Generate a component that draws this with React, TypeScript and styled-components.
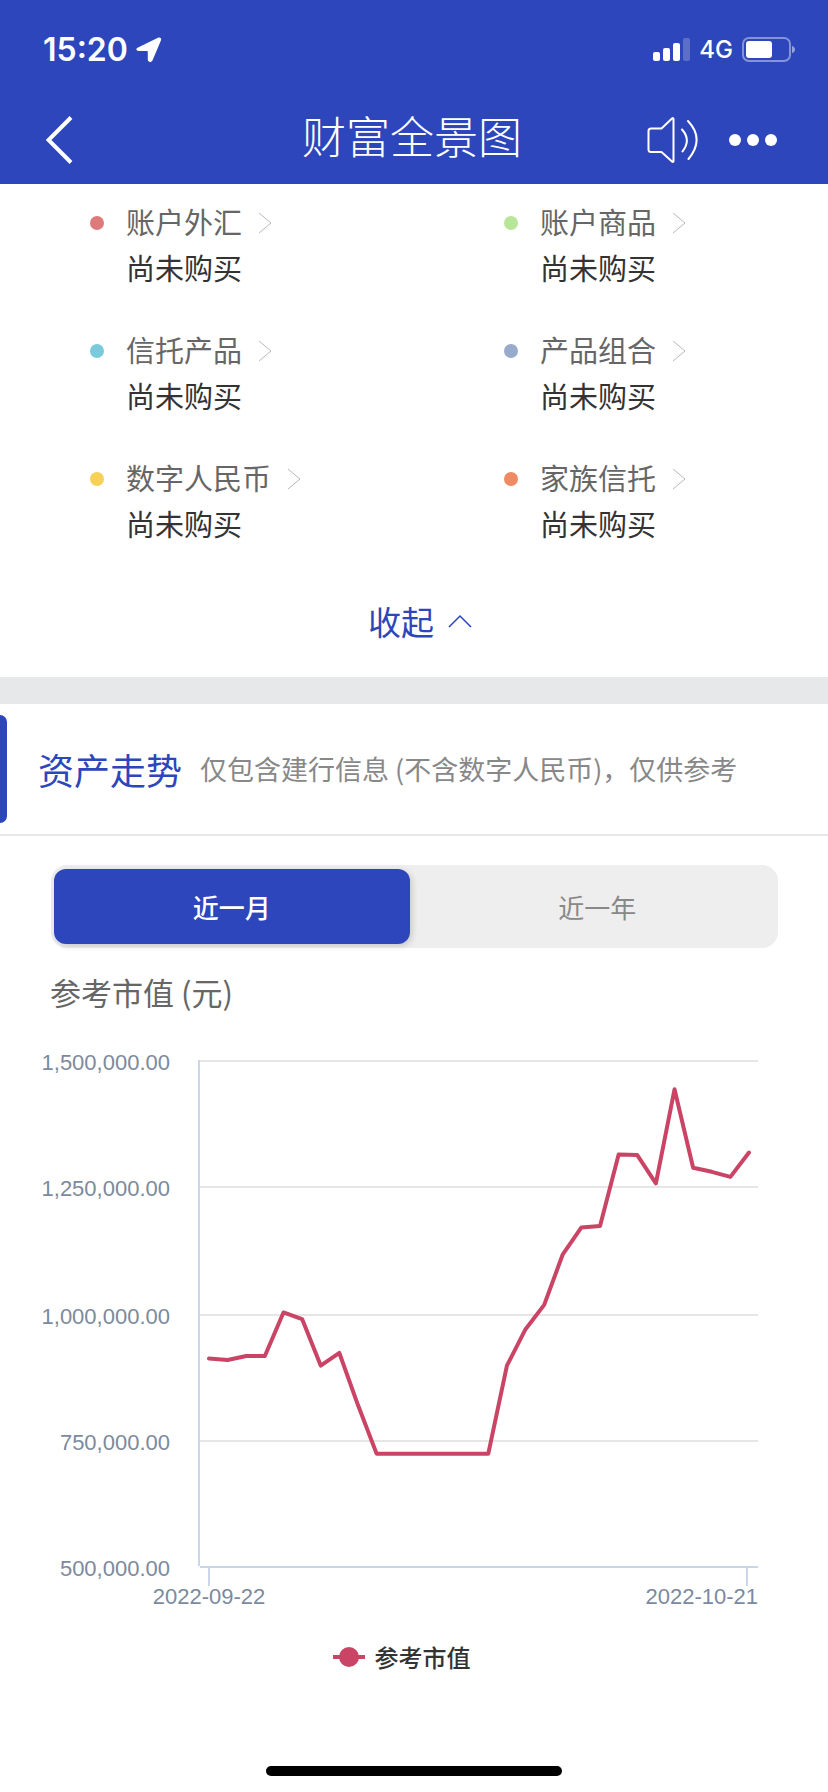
import React, { useState } from "react";
import styled, { createGlobalStyle } from "styled-components";

const BLUE = "#2d46bb";
const ROSE = "#c94465";

const GlobalStyle = createGlobalStyle`
  * { box-sizing: border-box; }
  body {
    margin: 0;
    background: #ffffff;
    font-family: "Noto Sans CJK SC", "Liberation Sans", sans-serif;
    color: #333333;
  }
  button {
    padding: 0;
    border: 0;
    background: none;
    font: inherit;
    color: inherit;
    cursor: pointer;
  }
  h1, h2, h3, p, ul { margin: 0; padding: 0; font-weight: 400; }
  a { color: inherit; text-decoration: none; }
  svg { display: block; flex: none; }
`;

const Page = styled.div`
  display: flex;
  flex-direction: column;
  min-height: 100vh;
`;

const Header = styled.header`
  background: ${BLUE};
  color: #ffffff;
`;

const StatusBar = styled.div`
  display: flex;
  align-items: center;
  justify-content: space-between;
  height: 100px;
  padding: 0 32px 0 43px;
  font-family: Inter, sans-serif;
`;

const StatusGroup = styled.div<{ $gap: number }>`
  display: flex;
  align-items: center;
  gap: ${(p) => p.$gap}px;
`;

const Time = styled.span`
  font-size: 32px;
  line-height: 40px;
  font-weight: 600;
`;

const Network = styled.span`
  font-size: 24px;
  line-height: 32px;
  font-weight: 500;
`;

const NavBar = styled.nav`
  display: grid;
  grid-template-columns: 1fr auto 1fr;
  align-items: center;
  height: 84px;
  padding: 0 50px 14px 46px;
`;

const NavTitle = styled.h1`
  font-size: 44px;
  line-height: 64px;
  font-weight: 300;
`;

const NavActions = styled.div`
  display: flex;
  align-items: center;
  justify-content: flex-end;
  gap: 28px;
  padding-top: 10px;
`;

const BackButton = styled.button`
  justify-self: start;
  padding-top: 10px;
`;

const Products = styled.ul`
  display: grid;
  grid-template-columns: 1fr 1fr;
  row-gap: 36px;
  padding-top: 14px;
  list-style: none;
`;

const Product = styled.li`
  display: grid;
  grid-template-columns: 14px 1fr;
  column-gap: 22px;
  align-items: center;
  padding-left: 90px;
  font-size: 29px;
  line-height: 46px;
`;

const Dot = styled.span<{ $color: string }>`
  width: 14px;
  height: 14px;
  margin-top: 4px;
  border-radius: 50%;
  background: ${(p) => p.$color};
`;

const ProductLink = styled.a`
  display: flex;
  align-items: center;
  gap: 16px;
  color: #666666;
`;

const LinkArrow = styled.svg`
  margin-top: 4px;
`;

const ProductState = styled.p`
  grid-column: 2;
`;

const Collapse = styled.button`
  display: flex;
  align-items: center;
  gap: 14px;
  align-self: center;
  margin: 51px 0 32px 12px;
  color: ${BLUE};
  font-size: 33px;
  line-height: 48px;
`;

const Divider = styled.div`
  height: 27px;
  background: #e6e8ea;
`;

const SectionHead = styled.div`
  display: flex;
  align-items: center;
  height: 132px;
  border-bottom: 2px solid #e6e8ea;
`;

const Marker = styled.span`
  width: 7px;
  height: 108px;
  margin-right: 31px;
  border-radius: 0 8px 8px 0;
  background: ${BLUE};
`;

const SectionTitle = styled.h2`
  color: ${BLUE};
  font-size: 36px;
  line-height: 48px;
`;

const SectionNote = styled.p`
  margin-left: 18px;
  color: #888888;
  font-size: 27px;
  line-height: 40px;
`;

const Tabs = styled.div`
  display: flex;
  gap: 10px;
  margin: 29px 50px 0 51px;
  padding: 4px 3px;
  border-radius: 16px;
  background: #eeeeee;
`;

const Tab = styled.button<{ $active: boolean }>`
  flex: 1 1 0;
  height: 75px;
  border-radius: 12px;
  font-size: 26px;
  line-height: 40px;
  color: ${(p) => (p.$active ? "#ffffff" : "#888888")};
  font-weight: ${(p) => (p.$active ? 500 : 400)};
  background: ${(p) => (p.$active ? BLUE : "transparent")};
  box-shadow: ${(p) => (p.$active ? "2px 2px 6px rgba(0, 0, 0, 0.16)" : "none")};
`;

const ChartTitle = styled.h3`
  margin: 20px 0 0 50px;
  color: #666666;
  font-size: 31px;
  line-height: 48px;
`;

const ChartSvg = styled.svg`
  width: 100%;
  height: auto;
  margin-top: 25px;
  font-family: "Liberation Sans", Arial, sans-serif;
  font-size: 22px;
`;

const Legend = styled.div`
  display: flex;
  align-items: center;
  justify-content: center;
  gap: 10px;
  margin: 23px 25px 0 0;
  font-size: 24px;
  line-height: 36px;
  font-weight: 500;
`;

const HomeIndicator = styled.div`
  width: 296px;
  height: 10px;
  margin: auto auto 16px;
  border-radius: 5px;
  background: #000000;
`;

const products = [
  { name: "账户外汇", color: "#dc7b79" },
  { name: "账户商品", color: "#b8e698" },
  { name: "信托产品", color: "#7acadb" },
  { name: "产品组合", color: "#98abcc" },
  { name: "数字人民币", color: "#f7d058" },
  { name: "家族信托", color: "#f08a62" },
];

/* Daily market value in thousands, 2022-09-22 to 2022-10-21. */
const values = [
  912, 909, 917, 917, 1003, 990, 898, 923, 820, 724, 724, 724, 724, 724, 724,
  724, 898, 970, 1018, 1118, 1171, 1174, 1315, 1314, 1258, 1444, 1289, 1281,
  1271, 1319,
];

const axis = [
  { label: "1,500,000.00", y: 20 },
  { label: "1,250,000.00", y: 146 },
  { label: "1,000,000.00", y: 274 },
  { label: "750,000.00", y: 400 },
  { label: "500,000.00", y: 526 },
];

const linePoints = values
  .map((v, i) => `${209 + (i * 540) / 29},${20 + (1500 - v) * 0.506}`)
  .join(" ");

function TrendChart() {
  return (
    <ChartSvg viewBox="0 0 828 575" role="img" aria-label="参考市值走势">
      {axis.map((a) => (
        <React.Fragment key={a.label}>
          <line
            x1="200"
            x2="758"
            y1={a.y}
            y2={a.y}
            stroke={a.y === 526 ? "#ccd6eb" : "#e6e6e6"}
            strokeWidth="2"
          />
          <text x="170" y={a.y + 9} textAnchor="end" fill="#7c8a9e">
            {a.label}
          </text>
        </React.Fragment>
      ))}
      <path d="M199 19V525M209 527v18M747 527v18" stroke="#ccd6eb" strokeWidth="2" />
      <text x="209" y="563" textAnchor="middle" fill="#7c8a9e">
        2022-09-22
      </text>
      <text x="758" y="563" textAnchor="end" fill="#7c8a9e">
        2022-10-21
      </text>
      <polyline
        points={linePoints}
        fill="none"
        stroke={ROSE}
        strokeWidth="4"
        strokeLinecap="round"
        strokeLinejoin="round"
      />
    </ChartSvg>
  );
}

function StatusIcons() {
  return (
    <StatusGroup $gap={9}>
      <svg width="37" height="24" viewBox="0 0 37 24" fill="#ffffff">
        <rect x="0" y="14" width="7" height="9" rx="2" />
        <rect x="10" y="10" width="7" height="13" rx="2" />
        <rect x="20" y="5" width="7" height="18" rx="2" />
        <rect x="30" y="0" width="7" height="23" rx="2" opacity="0.22" />
      </svg>
      <Network>4G</Network>
      <svg width="54" height="26" viewBox="0 0 54 26">
        <rect x="1" y="1" width="47" height="23" rx="6" fill="none" stroke="#ffffff" strokeWidth="2" opacity="0.42" />
        <rect x="4" y="4" width="26" height="17" rx="3" fill="#ffffff" />
        <path d="M50 9c4 1 4 6 0 7z" fill="#ffffff" opacity="0.5" />
      </svg>
    </StatusGroup>
  );
}

export default function App() {
  const [period, setPeriod] = useState("近一月");
  return (
    <Page>
      <GlobalStyle />
      <Header>
        <StatusBar>
          <StatusGroup $gap={8}>
            <Time>15:20</Time>
            <svg width="26" height="26" viewBox="0 0 26 26" fill="#ffffff">
              <path d="M1.500 10.800L22 .8C24.200 0 25.700 1.400 24.900 3.400L16.600 23.200C15.500 25.900 11.800 25.500 11.800 22.500V14.800C11.800 14.200 11.500 14 11 14H3C0 14 -.4 11.800 1.500 10.800Z" />
            </svg>
          </StatusGroup>
          <StatusIcons />
        </StatusBar>
        <NavBar>
          <BackButton aria-label="返回">
            <svg width="28" height="48" viewBox="0 0 28 48" fill="none" stroke="#ffffff" strokeWidth="4">
              <path d="M25 1.500L2.500 24L25 46.500" />
            </svg>
          </BackButton>
          <NavTitle>财富全景图</NavTitle>
          <NavActions>
            <button aria-label="语音播报">
              <svg width="54" height="48" viewBox="0 0 54 48" fill="none" stroke="#ffffff" strokeWidth="2" strokeLinecap="round" strokeLinejoin="round">
                <path d="M5 12.500H15.500L26 2.500C26.800 1.800 27.500 2 27.500 3V45C27.500 46 26.800 46.200 26 45.500L15.500 36H5Q2.500 36 2.500 33.500V15Q2.500 12.500 5 12.500Z" />
                <path d="M36 13.500Q45.500 24 36.500 35.500M42 5Q59 23 42.500 43" />
              </svg>
            </button>
            <button aria-label="更多">
              <svg width="50" height="14" viewBox="0 0 50 14" fill="#ffffff">
                <circle cx="7" cy="7" r="6" />
                <circle cx="25" cy="7" r="6" />
                <circle cx="43" cy="7" r="6" />
              </svg>
            </button>
          </NavActions>
        </NavBar>
      </Header>

      <Products>
        {products.map((p) => (
          <Product key={p.name}>
            <Dot $color={p.color} />
            <ProductLink href="#">
              {p.name}
              <LinkArrow width="14" height="22" viewBox="0 0 14 22" fill="none" stroke="#b8b8b8" strokeWidth="1">
                <path d="M1 1L13 11L1 21" />
              </LinkArrow>
            </ProductLink>
            <ProductState>尚未购买</ProductState>
          </Product>
        ))}
      </Products>
      <Collapse>
        收起
        <svg width="24" height="14" viewBox="0 0 24 14" fill="none" stroke={BLUE} strokeWidth="1.500">
          <path d="M1 13L12 2L23 13" />
        </svg>
      </Collapse>

      <Divider />
      <SectionHead>
        <Marker />
        <SectionTitle>资产走势</SectionTitle>
        <SectionNote>仅包含建行信息 (不含数字人民币)，仅供参考</SectionNote>
      </SectionHead>

      <Tabs>
        {["近一月", "近一年"].map((t) => (
          <Tab key={t} $active={t === period} aria-pressed={t === period} onClick={() => setPeriod(t)}>
            {t}
          </Tab>
        ))}
      </Tabs>
      <ChartTitle>参考市值 (元)</ChartTitle>
      <TrendChart />
      <Legend>
        <svg width="32" height="20" viewBox="0 0 32 20" fill={ROSE}>
          <rect y="8" width="32" height="4" />
          <circle cx="16" cy="10" r="10" />
        </svg>
        参考市值
      </Legend>
      <HomeIndicator />
    </Page>
  );
}
